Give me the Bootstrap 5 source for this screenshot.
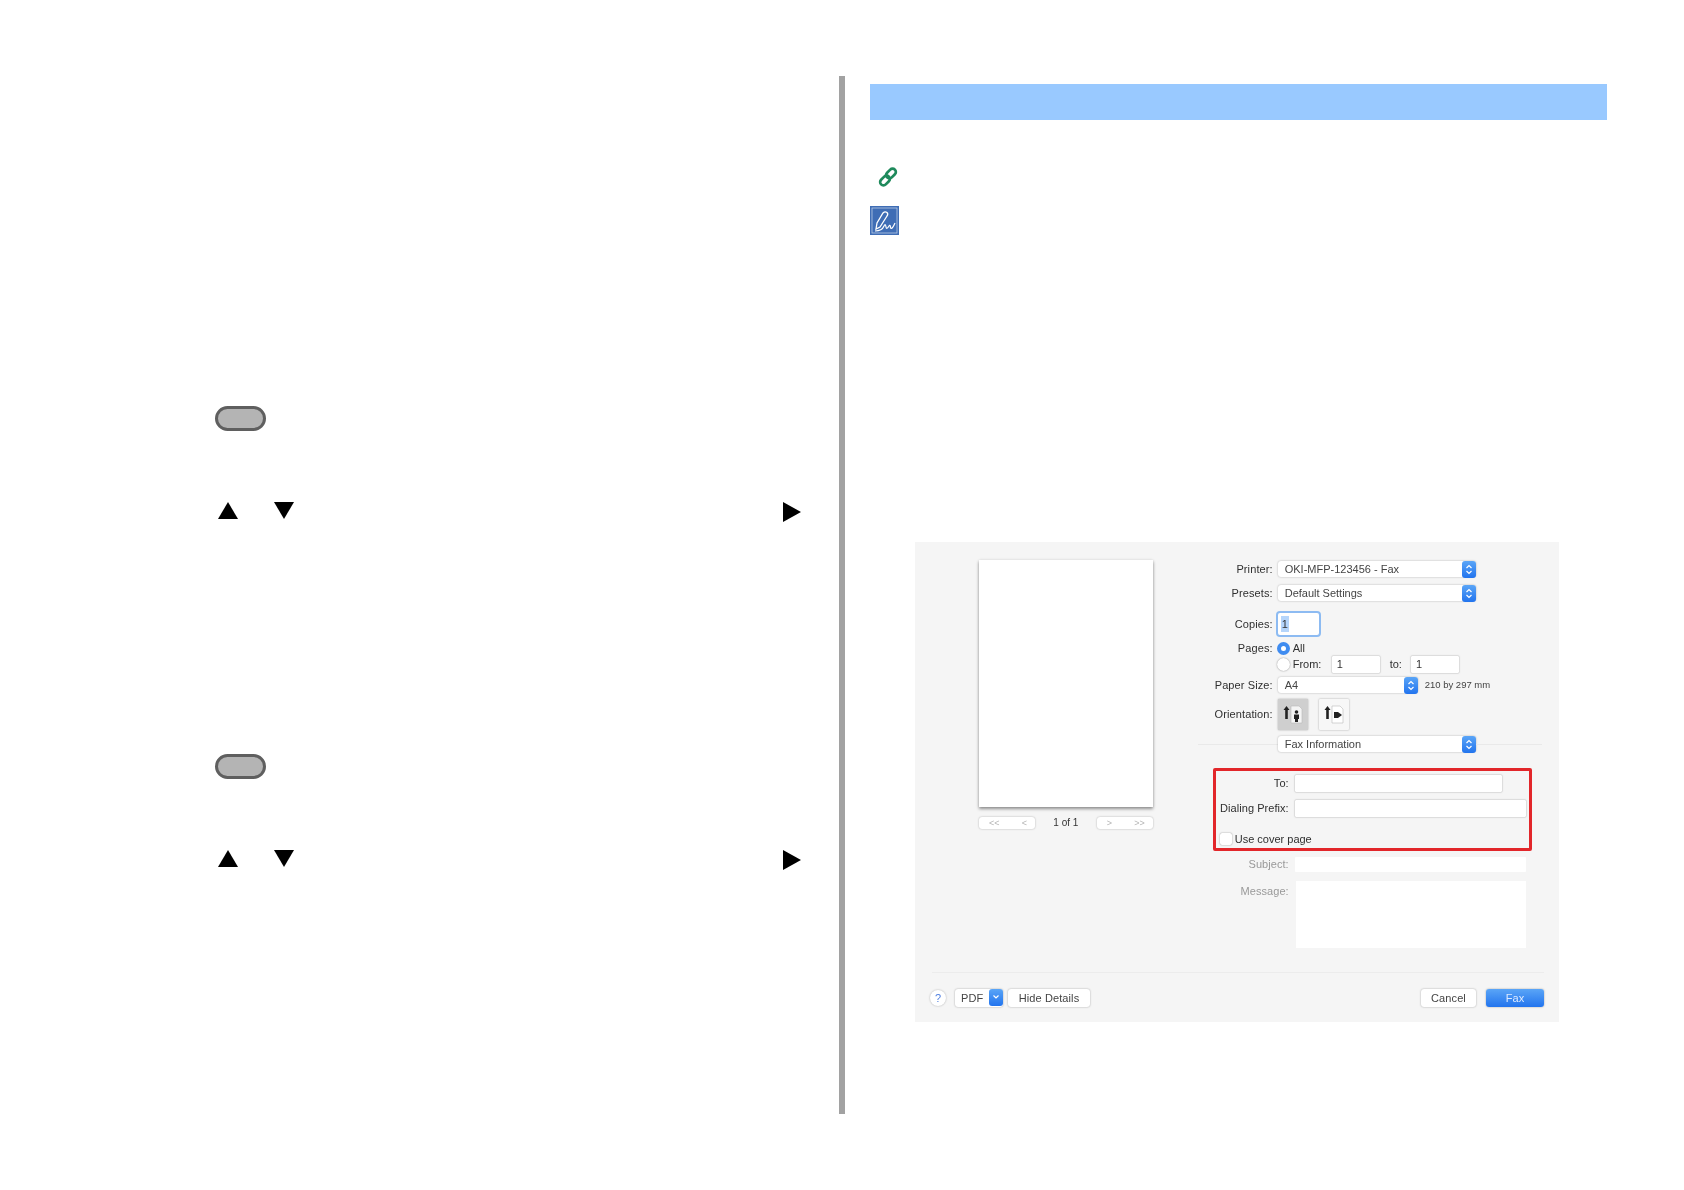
<!DOCTYPE html>
<html lang="en">
<head>
<meta charset="utf-8">
<title>Fax print dialog</title>
<link href="https://cdn.jsdelivr.net/npm/bootstrap@5.3.0/dist/css/bootstrap.min.css" rel="stylesheet">
<style>
body{background:#fff;margin:0;height:1190px;overflow:hidden;font-family:"Liberation Sans",Arial,sans-serif}
.sheet{padding-top:76px}
.pane-left{width:839px;height:1038px;padding-top:330px}
.pane-rule{width:6px;height:1038px;background:#a2a2a2}
.pane-right{padding:8px 0 0 25px}
.pill-key{display:block;width:51px;height:25px;margin-left:215px;border:3px solid #5f5f5f;border-radius:13px;background:#b4b4b4;filter:blur(.4px)}
.tri-row{margin:71px 38px 0 218px;height:21px}
.tri-row svg{display:block;filter:blur(.3px)}
.tri-gap{margin-left:35.5px}
.group-two{margin-top:231px}
.band{width:737px;height:36px;background:#99c9ff}
.ico-link{display:block;margin:47px 0 0 8px}
.ico-note{display:block;margin-top:19px}
.dlg{width:644px;height:480px;margin:307px 0 0 45px;background:#f5f5f5;font-size:11px;color:#2f2f2f;filter:blur(.5px)}
.dlg-top{height:430px}
.dlg-sep{height:1px;background:#ececec;margin:0 15px 0 17px}
.prev-col{width:174px;margin-left:64px;padding-top:18px}
.prev-page{height:247px;background:#fff;box-shadow:0 2px 3px rgba(0,0,0,.4),0 0 3px rgba(0,0,0,.1)}
.pager{margin-top:10px;height:12px;line-height:12px}
.pager-btn{width:56px;height:12px;background:#fff;border-radius:3px;box-shadow:0 0 2px rgba(0,0,0,.3);color:#b5b5b5;font-size:9px;padding:0 8px 0 10px}
.pager-num{font-size:10px;color:#333}
.form-col{width:370px;margin-left:37px;padding-top:15px}
.f-row{height:24px}
.f-label{width:83px;text-align:right;margin-right:5px;flex:none;letter-spacing:.1px}
.mac-sel{height:16px;background:#fff;border-radius:3px;box-shadow:0 0 2px rgba(0,0,0,.3);padding-left:7px;line-height:16px;color:#444}
.sel-wide{width:198px}
.sel-mid{width:140px}
.sel-cap{width:14px;height:17px;background:linear-gradient(#5aa5f7,#2274ee);border-radius:3px;flex:none;display:flex;align-items:center;justify-content:center}
.mac-input.form-control{min-height:0;height:17px;padding:0 5px;font-size:11px;color:#333;border:0;border-radius:1px;background:#fff;box-shadow:0 0 1.5px rgba(0,0,0,.5);line-height:17px}
.in-copies.form-control{width:41px;height:22px;padding-left:4px;border-radius:2px;box-shadow:0 0 0 2px #8dbbf2;background:linear-gradient(#b5d5fb,#b5d5fb) 3px 3px/8px 16px no-repeat #fff}
.in-short.form-control{width:48px}
.r-copies{margin-top:8px;height:22px}
.r-pages{margin-top:5px;height:16px}
.r-from{height:16px}
.r-paper{margin-top:2px;height:22px}
.r-orient{margin-top:2px;height:32px}
.r-fax{margin-top:5px;height:18px;margin-left:8px;width:344px}
.radio-on,.radio-off{width:13px;height:13px;border-radius:50%;flex:none;margin:0 3px 0 -1px}
.radio-on{background:#fff;border:4px solid #3f8cf0}
.radio-off{background:#fff;box-shadow:0 0 1.5px rgba(0,0,0,.5)}
.from-label{width:39px}
.to-label{margin:0 9px 0 10px}
.size-note{font-size:9.5px;margin-left:7px;color:#444}
.orient-btn{width:30px;height:31px;background:#f7f7f7;box-shadow:0 0 2px rgba(0,0,0,.35);border-radius:1px}
.orient-on{background:#cfcfcf}
.orient-gap{margin-left:11px}
.line-left{width:80px;height:1px;background:#e9e9e9;flex:none}
.line-right{width:66px;height:1px;background:#e9e9e9;flex:none}
.red-box{margin:15px 0 0 23px;width:319px;height:83px;border:3px solid #e2262a;border-radius:2px;padding-top:4px}
.p-label{width:73px;margin-right:6px;text-align:right;flex:none;letter-spacing:.05px}
.long-in{width:231px}
.to-in{width:207px}
.r-dial{margin-top:8px}
.r-cover{margin-top:14px;height:16px;padding-left:4px}
.check-box{width:12px;height:12px;background:#fff;border-radius:2px;box-shadow:0 0 1.5px rgba(0,0,0,.5);margin-right:3px;flex:none}
.dim-rows{margin-left:26px;color:#999}
.r-subject{margin-top:5px}
.sub-in.mac-input.form-control{height:15px;box-shadow:none}
.r-msg{margin-top:8px}
.msg-box{width:230px;height:67px;background:#fff;margin-left:1px}
.msg-label{padding-top:2px}
.dlg-foot{height:49px;padding:0 15px 0 15px}
.mac-btn{height:18px;line-height:18px;background:#fff;border-radius:3px;box-shadow:0 0 2px rgba(0,0,0,.35);text-align:center;color:#444;letter-spacing:.1px}
.btn-hide{width:82px;margin-left:5px}
.btn-pdf{width:48px;padding-left:6px;margin-left:9px}
.pdf-text{width:34px;text-align:left}
.btn-cancel{width:55px;margin-left:auto}
.btn-fax{width:58px;margin-left:10px;background:linear-gradient(#5aa5f7,#2274ee);color:#dceaff}
.help-dot{width:16px;height:16px;border-radius:50%;background:#fff;box-shadow:0 0 2px rgba(0,0,0,.3);color:#4f7fe0;font-size:11px;line-height:16px;text-align:center;flex:none}
</style>
</head>
<body>
<div class="sheet d-flex">
  <div class="pane-left">
    <span class="pill-key"></span>
    <div class="tri-row d-flex">
      <svg width="20" height="17" viewBox="0 0 20 17"><polygon points="10,0 20,17 0,17" fill="#000"/></svg>
      <svg class="tri-gap" width="20" height="17" viewBox="0 0 20 17"><polygon points="0,0 20,0 10,17" fill="#000"/></svg>
      <svg class="ms-auto" width="18" height="20" viewBox="0 0 18 20"><polygon points="0,0 18,10 0,20" fill="#000"/></svg>
    </div>
    <div class="group-two">
      <span class="pill-key"></span>
      <div class="tri-row d-flex">
        <svg width="20" height="17" viewBox="0 0 20 17"><polygon points="10,0 20,17 0,17" fill="#000"/></svg>
        <svg class="tri-gap" width="20" height="17" viewBox="0 0 20 17"><polygon points="0,0 20,0 10,17" fill="#000"/></svg>
        <svg class="ms-auto" width="18" height="20" viewBox="0 0 18 20"><polygon points="0,0 18,10 0,20" fill="#000"/></svg>
      </div>
    </div>
  </div>
  <div class="pane-rule"></div>
  <div class="pane-right">
    <div class="band"></div>
    <svg class="ico-link" width="20" height="20" viewBox="0 0 20 20" fill="none" stroke="#1f8a5c" stroke-width="2.7"><rect x="7.500" y="3.200" width="11" height="6.600" rx="3.300" transform="rotate(-45 13 6.500)"/><rect x="1.500" y="10.200" width="11" height="6.600" rx="3.300" transform="rotate(-45 7 13.500)"/></svg>
    <svg class="ico-note" width="29" height="29" viewBox="0 0 29 29"><rect width="29" height="29" fill="#3f6db5"/><rect x="2" y="2" width="25" height="25" fill="none" stroke="#b9cbe6" stroke-width=".8"/><path d="M6 23 L7 17 L13 7 Q15 5 17 6.500 Q18.500 8 17 10 L10 21 Z" fill="none" stroke="#fff" stroke-width="1.300"/><path d="M5 25 Q12 25 14 20 Q15.500 17 16 21 Q16.500 24 19 20 Q20.500 18 20.500 22 Q22 24 25 17" fill="none" stroke="#fff" stroke-width="1.200"/></svg>

    <div class="dlg">
      <div class="dlg-top d-flex">
        <div class="prev-col">
          <div class="prev-page"></div>
          <div class="pager d-flex justify-content-between align-items-center">
            <div class="pager-btn d-flex justify-content-between"><span>&lt;&lt;</span><span>&lt;</span></div>
            <span class="pager-num">1 of 1</span>
            <div class="pager-btn d-flex justify-content-between"><span>&gt;</span><span>&gt;&gt;</span></div>
          </div>
        </div>
        <div class="form-col">
          <div class="f-row d-flex align-items-center">
            <span class="f-label">Printer:</span>
            <div class="mac-sel sel-wide d-flex justify-content-between"><span>OKI-MFP-123456 - Fax</span><span class="sel-cap"><svg width="8" height="11" viewBox="0 0 8 11" fill="none" stroke="#fff" stroke-width="1.200"><path d="M1.500 4 L4 1.500 L6.500 4 M1.500 7 L4 9.500 L6.500 7"/></svg></span></div>
          </div>
          <div class="f-row d-flex align-items-center">
            <span class="f-label">Presets:</span>
            <div class="mac-sel sel-wide d-flex justify-content-between"><span>Default Settings</span><span class="sel-cap"><svg width="8" height="11" viewBox="0 0 8 11" fill="none" stroke="#fff" stroke-width="1.200"><path d="M1.500 4 L4 1.500 L6.500 4 M1.500 7 L4 9.500 L6.500 7"/></svg></span></div>
          </div>
          <div class="r-copies d-flex align-items-center">
            <span class="f-label">Copies:</span>
            <input class="form-control mac-input in-copies" value="1" aria-label="Copies">
          </div>
          <div class="r-pages d-flex align-items-center">
            <span class="f-label">Pages:</span>
            <span class="radio-on"></span><span>All</span>
          </div>
          <div class="r-from d-flex align-items-center">
            <span class="f-label"></span>
            <span class="radio-off"></span><span class="from-label">From:</span>
            <input class="form-control mac-input in-short" value="1" aria-label="From">
            <span class="to-label">to:</span>
            <input class="form-control mac-input in-short" value="1" aria-label="To page">
          </div>
          <div class="r-paper d-flex align-items-center">
            <span class="f-label">Paper Size:</span>
            <div class="mac-sel sel-mid d-flex justify-content-between"><span>A4</span><span class="sel-cap"><svg width="8" height="11" viewBox="0 0 8 11" fill="none" stroke="#fff" stroke-width="1.200"><path d="M1.500 4 L4 1.500 L6.500 4 M1.500 7 L4 9.500 L6.500 7"/></svg></span></div>
            <span class="size-note">210 by 297 mm</span>
          </div>
          <div class="r-orient d-flex align-items-center">
            <span class="f-label">Orientation:</span>
            <div class="orient-btn orient-on d-flex align-items-center justify-content-center">
              <svg width="24" height="24" viewBox="0 0 24 24"><path d="M5.500 4 L8.500 8 H6.800 V17 H4.200 V8 H2.500 Z" fill="#222"/><path d="M10 4 H18 L21 7 V21 H10 Z" fill="#f4f4f4" stroke="#bbb" stroke-width=".6"/><circle cx="15.500" cy="10" r="1.800" fill="#222"/><path d="M13 12.500 H18 V17 H17 V20 H14 V17 H13 Z" fill="#222"/></svg>
            </div>
            <div class="orient-btn orient-gap d-flex align-items-center justify-content-center">
              <svg width="24" height="24" viewBox="0 0 24 24"><path d="M5.500 4 L8.500 8 H6.800 V17 H4.200 V8 H2.500 Z" fill="#222"/><path d="M10 4 H18 L21 7 V21 H10 Z" fill="#fff" stroke="#bbb" stroke-width=".6"/><path d="M12 10 H16 L20 13 L16 16 H12 Z" fill="#222"/></svg>
            </div>
          </div>
          <div class="r-fax d-flex align-items-center">
            <div class="line-left"></div>
            <div class="mac-sel sel-wide d-flex justify-content-between"><span>Fax Information</span><span class="sel-cap"><svg width="8" height="11" viewBox="0 0 8 11" fill="none" stroke="#fff" stroke-width="1.200"><path d="M1.500 4 L4 1.500 L6.500 4 M1.500 7 L4 9.500 L6.500 7"/></svg></span></div>
            <div class="line-right"></div>
          </div>
          <div class="red-box">
            <div class="d-flex align-items-center">
              <span class="p-label">To:</span>
              <input class="form-control mac-input to-in" aria-label="To">
            </div>
            <div class="r-dial d-flex align-items-center">
              <span class="p-label">Dialing Prefix:</span>
              <input class="form-control mac-input long-in" aria-label="Dialing Prefix">
            </div>
            <div class="r-cover d-flex align-items-center">
              <span class="check-box"></span><span>Use cover page</span>
            </div>
          </div>
          <div class="dim-rows">
            <div class="r-subject d-flex align-items-center">
              <span class="p-label">Subject:</span>
              <input class="form-control mac-input sub-in long-in" aria-label="Subject">
            </div>
            <div class="r-msg d-flex align-items-start">
              <span class="p-label msg-label">Message:</span>
              <div class="msg-box"></div>
            </div>
          </div>
        </div>
      </div>
      <div class="dlg-sep"></div>
      <div class="dlg-foot d-flex align-items-center">
        <span class="help-dot">?</span>
        <div class="mac-btn btn-pdf d-flex justify-content-between"><span class="pdf-text">PDF</span><span class="sel-cap"><svg width="8" height="6" viewBox="0 0 8 6" fill="none" stroke="#fff" stroke-width="1.200"><path d="M1.500 1.500 L4 4 L6.500 1.500"/></svg></span></div>
        <div class="mac-btn btn-hide">Hide Details</div>
        <div class="mac-btn btn-cancel">Cancel</div>
        <div class="mac-btn btn-fax">Fax</div>
      </div>
    </div>
  </div>
</div>
<script src="https://cdn.jsdelivr.net/npm/bootstrap@5.3.0/dist/js/bootstrap.bundle.min.js"></script>
</body>
</html>
